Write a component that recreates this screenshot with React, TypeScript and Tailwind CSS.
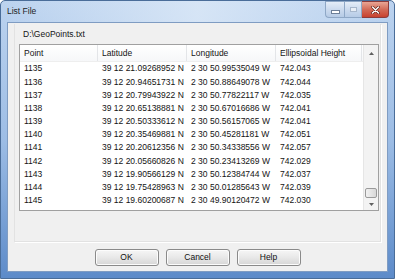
import React from 'react'

const ROWS = [
  ['1135', '39 12 21.09268952 N', '2 30 50.99535049 W', '742.043'],
  ['1136', '39 12 20.94651731 N', '2 30 50.88649078 W', '742.044'],
  ['1137', '39 12 20.79943922 N', '2 30 50.77822117 W', '742.035'],
  ['1138', '39 12 20.65138881 N', '2 30 50.67016686 W', '742.041'],
  ['1139', '39 12 20.50333612 N', '2 30 50.56157065 W', '742.041'],
  ['1140', '39 12 20.35469881 N', '2 30 50.45281181 W', '742.051'],
  ['1141', '39 12 20.20612356 N', '2 30 50.34338556 W', '742.057'],
  ['1142', '39 12 20.05660826 N', '2 30 50.23413269 W', '742.029'],
  ['1143', '39 12 19.90566129 N', '2 30 50.12384744 W', '742.037'],
  ['1144', '39 12 19.75428963 N', '2 30 50.01285643 W', '742.039'],
  ['1145', '39 12 19.60200687 N', '2 30 49.90120472 W', '742.030'],
]

const HEADERS = ['Point', 'Latitude', 'Longitude', 'Ellipsoidal Height']
// column widths from the list's left edge
const COLS = ['w-[78px]', 'w-[89px]', 'w-[89px]', 'w-[86px]']

function DialogButton({ label }: { label: string }) {
  return (
    <button className="w-[64px] h-[17px] rounded-[3px] border border-[#8a8a8a] bg-gradient-to-b from-[#f6f6f6] via-[#e8e8e8] to-[#d6d6d6] text-[8.5px] leading-none text-[#111] shadow-[inset_0_0_0_1px_#fcfcfc]">
      {label}
    </button>
  )
}

function CaptionButtons() {
  return (
    <div className="flex h-[17px] self-start">
      <div className="w-[19px] h-full border border-[#8ea7c6] border-r-0 rounded-bl-[4px] bg-gradient-to-b from-[#e4edf8] via-[#cbdaee] to-[#b6cbe6] flex items-center justify-center">
        <div className="w-[7px] h-[2px] mt-[4px] bg-white border border-[#6c7f99] box-content" />
      </div>
      <div className="w-[18px] h-full border border-[#8ea7c6] bg-gradient-to-b from-[#e4edf8] via-[#cbdaee] to-[#b6cbe6] flex items-center justify-center">
        <div className="w-[7px] h-[5px] border border-[#a7b7cc] bg-[#e8eef6]" />
      </div>
      <div className="w-[27px] h-full border border-[#8c3c3c] border-l-0 rounded-br-[4px] bg-gradient-to-b from-[#e8a595] via-[#d26a57] to-[#c8412f] flex items-center justify-center">
        <svg width="9" height="8" viewBox="0 0 9 8">
          <path d="M1.5 1 L7.5 7 M7.5 1 L1.5 7" stroke="#5a1a12" strokeWidth="2.6" strokeLinecap="round" />
          <path d="M1.5 1 L7.5 7 M7.5 1 L1.5 7" stroke="#ffffff" strokeWidth="1.5" strokeLinecap="round" />
        </svg>
      </div>
    </div>
  )
}

function Scrollbar() {
  return (
    <div className="w-[15px] flex flex-col bg-[#f3f3f3] border-l border-[#e6e6e6]">
      <div className="h-[16px] flex items-center justify-center">
        <svg width="5" height="3" viewBox="0 0 5 3">
          <path d="M0 3 L2.5 0 L5 3 Z" fill="#606060" />
        </svg>
      </div>
      <div className="flex-1 flex flex-col justify-end px-[1px]">
        <div className="h-[10px] rounded-[2px] border border-[#9a9a9a] bg-gradient-to-r from-[#f2f2f2] to-[#d8d8d8]" />
      </div>
      <div className="h-[12px] flex items-center justify-center">
        <svg width="5" height="3" viewBox="0 0 5 3">
          <path d="M0 0 L2.5 3 L5 0 Z" fill="#606060" />
        </svg>
      </div>
    </div>
  )
}

export default function App() {
  return (
    <div
      className="w-[395px] h-[279px] flex flex-col bg-gradient-to-b from-[#bcd3ef] via-[#9dbde5] to-[#5d8bc9] border border-[#4a6d99] rounded-t-[5px] overflow-hidden text-[#141414]"
      style={{ fontFamily: '"Liberation Sans", Arial, sans-serif' }}
    >
      {/* Title bar */}
      <div className="h-[21px] flex items-start justify-between pl-[6px] pr-[5px] bg-gradient-to-r from-transparent via-[#e2edf9]/70 to-transparent">
        <span className="text-[8.5px] leading-none mt-[6px] text-[#1e1e1e]">List File</span>
        <CaptionButtons />
      </div>

      {/* Client area */}
      <div className="flex-1 mx-[6px] mb-[6px] bg-[#f0f0f0] border border-[#7f9cc2] flex flex-col">
        <div className="mx-[6px] mt-[1px] h-[218px] border border-[#e2e2e2] border-t-0 shadow-[1px_1px_0_#ffffff] flex flex-col">
          <div className="h-[20px] pl-[8px] flex items-center text-[8.5px]">D:\GeoPoints.txt</div>
          <div className="ml-[4px] w-[360px] h-[167px] border border-[#a0a0a0] bg-white flex">
            <div className="flex-1 flex flex-col overflow-hidden">
              <div className="h-[17px] flex border-b border-[#eeeeee] bg-gradient-to-b from-white to-[#f6f7f9]">
                {HEADERS.map((h, i) => (
                  <div
                    key={h}
                    className={`${COLS[i]} shrink-0 pl-[4px] flex items-center text-[8.5px] border-r border-[#e3e5e8]`}
                  >
                    {h}
                  </div>
                ))}
              </div>
              {ROWS.map((r) => (
                <div key={r[0]} className="h-[13.2px] flex text-[8.5px] leading-none">
                  {r.map((c, i) => (
                    <div key={i} className={`${COLS[i]} shrink-0 pl-[4px] flex items-center`}>
                      {c}
                    </div>
                  ))}
                </div>
              ))}
            </div>
            <Scrollbar />
          </div>
        </div>
        <div className="flex-1 flex items-center justify-center gap-[7px] pt-[1px]">
          <DialogButton label="OK" />
          <DialogButton label="Cancel" />
          <DialogButton label="Help" />
        </div>
      </div>
    </div>
  )
}
